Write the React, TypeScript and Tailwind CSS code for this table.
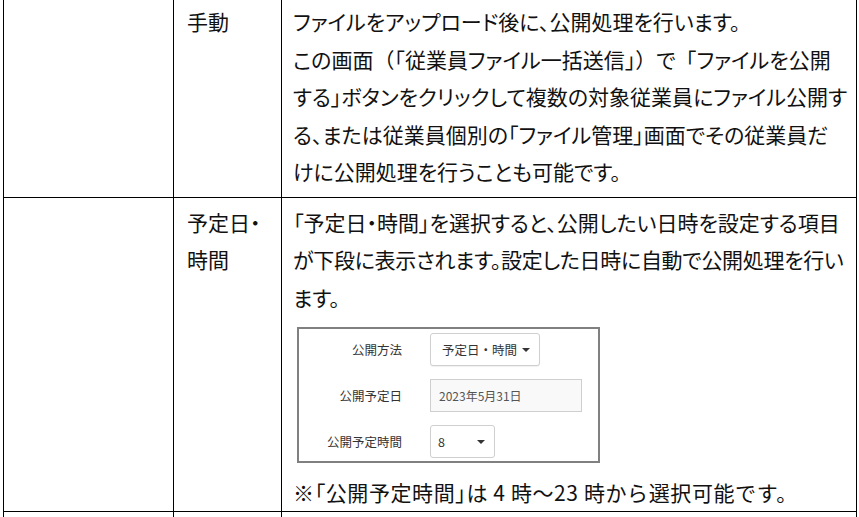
import React from "react";

const Caret = () => (
     <span className="inline-block w-0 h-0 border-l-[4px] border-r-[4px] border-t-[4px] border-l-transparent border-r-transparent border-t-[#333]" />
);

// full-width bracket (no palt squeeze)
const Fw = ({ children }: { children: React.ReactNode }) => (
     <span className="[font-feature-settings:normal]">{children}</span>
);

// squeezed bracket
const Pw = ({ children }: { children: React.ReactNode }) => (
     <span className="[font-feature-settings:'palt']">{children}</span>
);

const SettingsShot = () => {
     return (
          <div className="mt-[11px] w-[303px] h-[136px] border-2 border-[#808080] bg-white pt-[4px] font-['Noto_Sans_CJK_JP',sans-serif] text-[12.5px] text-[#333] [font-feature-settings:normal]">
               <div className="grid grid-cols-[103px_auto] gap-x-[28px] gap-y-[13px] items-center">
                    <div className="text-right leading-[33px]">公開方法</div>
                    <div>
                         <div className="w-[110px] h-[33px] flex items-center justify-between pl-[11px] pr-[9px] bg-white border border-[#cfcfcf] rounded-[3px] shadow-[0_1px_1px_rgba(0,0,0,0.06)]">
                              <span>予定日・時間</span>
                              <Caret />
                         </div>
                    </div>
                    <div className="text-right leading-[33px]">公開予定日</div>
                    <div>
                         <div className="w-[152px] h-[33px] flex items-center pl-[8px] bg-[#f9f9f9] border border-[#cfcfcf] text-[#555] text-[12px]">
                              2023年5月31日
                         </div>
                    </div>
                    <div className="text-right leading-[33px]">公開予定時間</div>
                    <div>
                         <div className="w-[65px] h-[33px] flex items-center justify-between pl-[7px] pr-[9px] bg-white border border-[#cfcfcf] rounded-[3px]">
                              <span>8</span>
                              <Caret />
                         </div>
                    </div>
               </div>
          </div>
     );
};

export default function App() {
     return (
          <div className="w-[859px] h-[517px] overflow-hidden bg-white">
               <div className="ml-[3px] -mt-[4px] grid grid-cols-[170px_108px_575px] border-t border-l border-black font-['Noto_Sans_CJK_JP',sans-serif] text-[21px] leading-[37.5px] text-[#111] [font-feature-settings:'palt']">
                    {/* 手動 */}
                    <div className="border-r border-b border-black" />
                    <div className="border-r border-b border-black pl-[13px] pt-[6px]">
                         手動
                    </div>
                    <div className="border-r border-b border-black pl-[11px] pt-[6px] pb-[6px] whitespace-nowrap">
                         ファイルをアップロード後に、公開処理を行います。
                         <br />
                         この画面<Fw>（「</Fw>従業員ファイル一括送信<Fw>」）</Fw>で<Fw>「</Fw>ファイルを公開
                         <br />
                         する」ボタンをクリックして複数の対象従業員にファイル公開す
                         <br />
                         る、または従業員個別の「ファイル管理」画面でその従業員だ
                         <br />
                         けに公開処理を行うことも可能です。
                    </div>

                    {/* 予定日・時間 */}
                    <div className="border-r border-b border-black" />
                    <div className="border-r border-b border-black pl-[13px] pt-[6px]">
                         予定日・
                         <br />
                         時間
                    </div>
                    <div className="border-r border-b border-black pl-[11px] pt-[6px] whitespace-nowrap">
                         「予定日・時間」を選択すると、公開したい日時を設定する項目
                         <br />
                         <span className="tracking-[-0.3px]">
                              が下段に表示されます。設定した日時に自動で公開処理を行い
                         </span>
                         <br />
                         ます。
                         <div className="pl-[4px]">
                              <SettingsShot />
                         </div>
                         <div className="mt-[11px] leading-[37px] tracking-[0.6px] [font-feature-settings:normal]">
                              <Pw>※「</Pw>公開予定時間<Pw>」</Pw>は 4 時～23 時から選択可能です。
                         </div>
                    </div>

                    {/* next row, cut off */}
                    <div className="h-[30px] border-r border-black" />
                    <div className="h-[30px] border-r border-black" />
                    <div className="h-[30px] border-r border-black" />
               </div>
          </div>
     );
}
